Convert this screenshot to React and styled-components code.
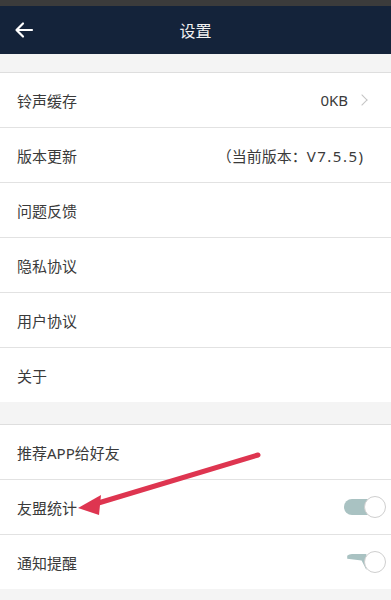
import React from "react";
import styled, { createGlobalStyle } from "styled-components";

const GlobalStyle = createGlobalStyle`
  body {
    margin: 0;
    background: #f4f4f4;
    font-family: "Noto Sans", "Noto Sans CJK SC", sans-serif;
  }
`;

const Page = styled.div`
  position: relative;
  width: 391px;
  height: 600px;
  overflow: hidden;
  background: #f4f4f4;
`;

const StatusStrip = styled.div`
  height: 6px;
  background: #3b3b3b;
`;

const Header = styled.div`
  height: 48px;
  background: #14233a;
  display: flex;
  align-items: center;
  justify-content: center;
  position: relative;
`;

const BackButton = styled.div`
  position: absolute;
  left: 14px;
  top: 14px;
  width: 20px;
  height: 20px;
`;

const Title = styled.div`
  color: #f2f2f2;
  font-size: 16px;
`;

const Gap = styled.div`
  height: ${({ h }) => h}px;
  border-bottom: 1px solid #dedede;
`;

const Group = styled.div`
  background: #ffffff;
`;

const Row = styled.div`
  height: 54px;
  display: flex;
  align-items: center;
  justify-content: space-between;
  padding: 0 18px 0 17px;
  border-bottom: ${({ last }) => (last ? "none" : "1px solid #e2e2e2")};
`;

const Label = styled.span`
  font-size: 15px;
  color: #3a3a3a;
`;

const Right = styled.div`
  display: flex;
  align-items: center;
  gap: 10px;
  font-size: 15px;
  color: #3a3a3a;
  margin-right: ${({ shift }) => shift || 0}px;
`;

const Version = styled.span`
  letter-spacing: 1.5px;
`;

const Chevron = styled.span`
  width: 7px;
  height: 7px;
  border-top: 1.5px solid #c4c4c4;
  border-right: 1.5px solid #c4c4c4;
  transform: rotate(45deg);
  margin-right: 7px;
`;

const Toggle = styled.div`
  position: relative;
  width: 42px;
  height: 22px;
  margin-right: -13px;
`;

const Track = styled.div`
  position: absolute;
  left: 0;
  top: 3px;
  width: 32px;
  height: 16px;
  border-radius: 8px;
  background: #a9c2c2;
  clip-path: ${({ moving }) =>
    moving ? "polygon(10% 0, 70% 0, 70% 100%, 55% 40%, 10% 30%)" : "none"};
`;

const Knob = styled.div`
  position: absolute;
  right: 0;
  top: 0;
  width: 20px;
  height: 20px;
  border-radius: 50%;
  background: #fff;
  border: 1px solid #cfcfcf;
`;

const Arrow = styled.svg`
  position: absolute;
  left: 0;
  top: 0;
  pointer-events: none;
`;

const Section = ({ rows }) => (
  <Group>
    {rows.map((r, i) => (
      <Row key={r.label} last={i === rows.length - 1 ? 1 : 0}>
        <Label>{r.label}</Label>
        {r.right}
      </Row>
    ))}
  </Group>
);

export default function App() {
  const first = [
    {
      label: "铃声缓存",
      right: (
        <Right>
          0KB
          <Chevron />
        </Right>
      ),
    },
    {
      label: "版本更新",
      right: (
        <Right shift={10}>
          <span>
            （当前版本：<Version>V7.5.5</Version>)
          </span>
        </Right>
      ),
    },
    { label: "问题反馈" },
    { label: "隐私协议" },
    { label: "用户协议" },
    { label: "关于" },
  ];
  const second = [
    { label: "推荐APP给好友" },
    {
      label: "友盟统计",
      right: (
        <Toggle>
          <Track />
          <Knob />
        </Toggle>
      ),
    },
    {
      label: "通知提醒",
      right: (
        <Toggle>
          <Track moving={1} />
          <Knob />
        </Toggle>
      ),
    },
  ];

  return (
    <Page>
      <GlobalStyle />
      <StatusStrip />
      <Header>
        <BackButton>
          <svg width="20" height="20" viewBox="0 0 20 20">
            <path
              d="M18 10H3M9 3.5L2.5 10L9 16.5"
              stroke="#fff"
              strokeWidth="2.2"
              fill="none"
              strokeLinecap="round"
              strokeLinejoin="round"
            />
          </svg>
        </BackButton>
        <Title>设置</Title>
      </Header>
      <Gap h={18} />
      <Section rows={first} />
      <Gap h={22} />
      <Section rows={second} />
      <Arrow width="391" height="600">
        <line x1="258" y1="455" x2="95" y2="504" stroke="#de3550" strokeWidth="5" strokeLinecap="round" />
        <polygon points="78,508 101,495 99,515" fill="#de3550" />
      </Arrow>
    </Page>
  );
}
